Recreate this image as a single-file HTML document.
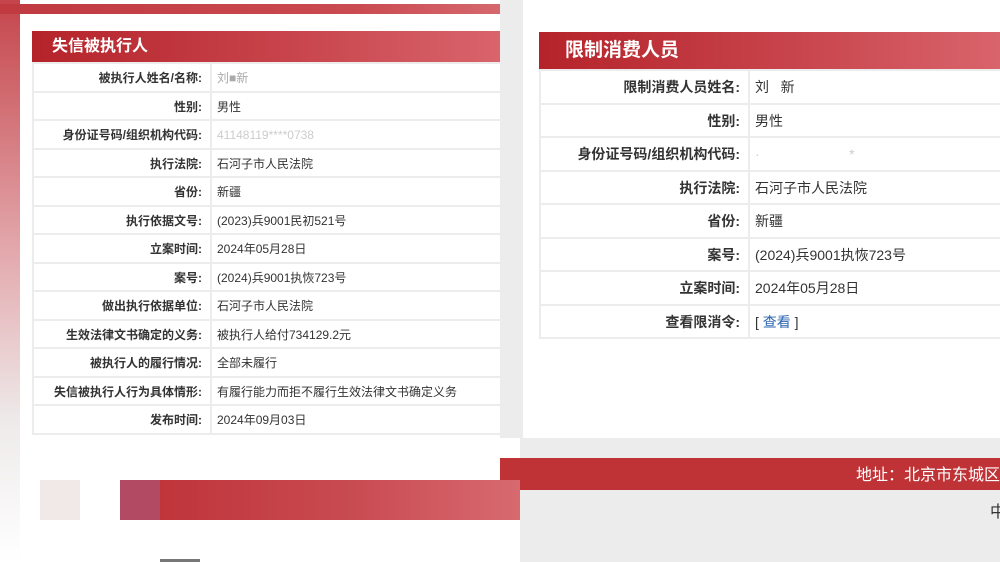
<!DOCTYPE html><html><head><meta charset="utf-8"><style>
*{margin:0;padding:0;box-sizing:border-box}
body{width:1000px;height:562px;overflow:hidden;position:relative;background:#fff;font-family:"Liberation Sans","Noto Sans CJK SC",sans-serif}
.abs{position:absolute}
table{border-collapse:collapse;position:absolute;background:#fff}
td{border:2px solid #ececec;color:#333}
td.l{text-align:right;font-weight:bold;padding-right:8px}
td.v{padding-left:5px}
.h{position:absolute;color:#fff;font-weight:bold;background:linear-gradient(90deg,#b5232a,#c8444c 55%,#d9646b)}
</style></head><body>
<div class="abs" style="left:0;top:0;width:20px;height:562px;background:linear-gradient(180deg,#c4454b,#e3a9ad 45%,#eeeaea 75%,#fff)"></div>
<div class="abs" style="left:0;top:4px;width:500px;height:10px;background:linear-gradient(90deg,#c03a40,#c94a50 70%,#d5686d)"></div>
<div class="h" style="left:32px;top:31px;width:468px;height:31px;font-size:16px;line-height:31px;padding-left:20px">失信被执行人</div>
<table style="left:32px;top:62px;width:470px;font-size:12px">
<colgroup><col style="width:178px"><col></colgroup>
<tr style="height:29px"><td class="l">被执行人姓名/名称:</td><td class="v" style="color:#aaa">刘■新</td></tr>
<tr style="height:28px"><td class="l">性别:</td><td class="v">男性</td></tr>
<tr style="height:29px"><td class="l">身份证号码/组织机构代码:</td><td class="v" style="color:#ccc">41148119****0738</td></tr>
<tr style="height:28px"><td class="l">执行法院:</td><td class="v">石河子市人民法院</td></tr>
<tr style="height:29px"><td class="l">省份:</td><td class="v">新疆</td></tr>
<tr style="height:28px"><td class="l">执行依据文号:</td><td class="v">(2023)兵9001民初521号</td></tr>
<tr style="height:29px"><td class="l">立案时间:</td><td class="v">2024年05月28日</td></tr>
<tr style="height:28px"><td class="l">案号:</td><td class="v">(2024)兵9001执恢723号</td></tr>
<tr style="height:29px"><td class="l">做出执行依据单位:</td><td class="v">石河子市人民法院</td></tr>
<tr style="height:28px"><td class="l">生效法律文书确定的义务:</td><td class="v">被执行人给付734129.2元</td></tr>
<tr style="height:29px"><td class="l">被执行人的履行情况:</td><td class="v">全部未履行</td></tr>
<tr style="height:28px"><td class="l">失信被执行人行为具体情形:</td><td class="v">有履行能力而拒不履行生效法律文书确定义务</td></tr>
<tr style="height:29px"><td class="l">发布时间:</td><td class="v">2024年09月03日</td></tr>
</table>
<div class="abs" style="left:500px;top:0;width:500px;height:562px;background:#ececec"></div>
<div class="abs" style="left:500px;top:438px;width:20px;height:124px;background:#fff"></div>
<div class="abs" style="left:40px;top:480px;width:40px;height:40px;background:#f1e8e8"></div>
<div class="abs" style="left:120px;top:480px;width:400px;height:40px;background:linear-gradient(90deg,#b34a64 0,#b34a64 40px,#bf353a 40px,#c94c53 60%,#d76a6f)"></div>
<div class="abs" style="left:160px;top:559px;width:40px;height:3px;background:#777"></div>
<div class="abs" style="left:523px;top:0;width:477px;height:438px;background:#fff"></div>
<div class="h" style="left:539px;top:32px;width:461px;height:37px;font-size:19px;line-height:37px;padding-left:26px">限制消费人员</div>
<table style="left:539px;top:69px;width:463px;font-size:14px">
<colgroup><col style="width:209px"><col></colgroup>
<tr style="height:34px"><td class="l">限制消费人员姓名:</td><td class="v">刘&nbsp;&nbsp;&nbsp;新</td></tr>
<tr style="height:33px"><td class="l">性别:</td><td class="v">男性</td></tr>
<tr style="height:34px"><td class="l">身份证号码/组织机构代码:</td><td class="v" style="color:#ccc">·&nbsp;&nbsp;&nbsp;&nbsp;&nbsp;&nbsp;&nbsp;&nbsp;&nbsp;&nbsp;&nbsp;&nbsp;&nbsp;&nbsp;&nbsp;&nbsp;&nbsp;&nbsp;&nbsp;&nbsp;&nbsp;&nbsp;&nbsp;*</td></tr>
<tr style="height:33px"><td class="l">执行法院:</td><td class="v">石河子市人民法院</td></tr>
<tr style="height:34px"><td class="l">省份:</td><td class="v">新疆</td></tr>
<tr style="height:33px"><td class="l">案号:</td><td class="v">(2024)兵9001执恢723号</td></tr>
<tr style="height:34px"><td class="l">立案时间:</td><td class="v">2024年05月28日</td></tr>
<tr style="height:33px"><td class="l">查看限消令:</td><td class="v">[ <span style="color:#2a64b0">查看</span> ]</td></tr>
</table>
<div class="abs" style="left:520px;top:458px;width:480px;height:32px;background:#bf3337;color:#fff;font-size:16px;line-height:36px;text-align:right;white-space:nowrap;overflow:hidden">地址：北京市东城区</div>
<div class="abs" style="left:500px;top:458px;width:20px;height:22px;background:#bf3337"></div>
<div class="abs" style="left:990px;top:498px;font-size:16px;color:#333">中</div>
</body></html>
